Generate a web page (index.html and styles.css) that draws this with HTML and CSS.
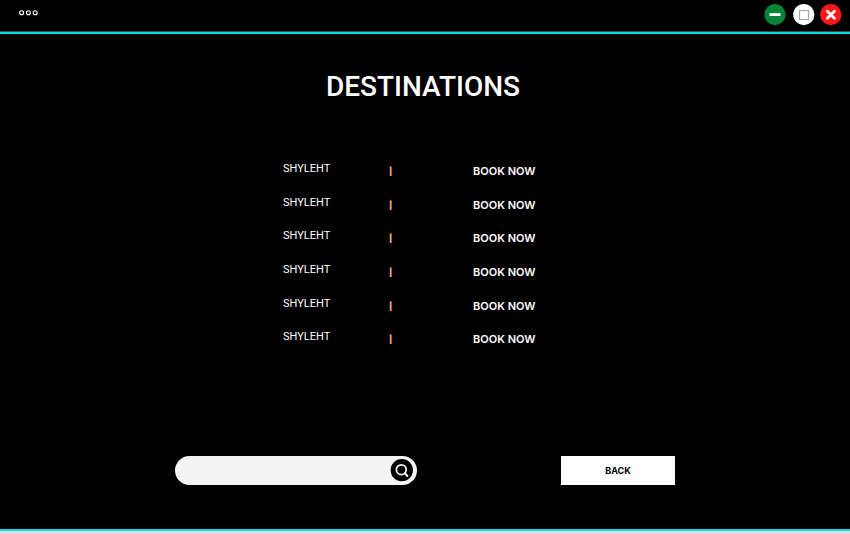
FILE: index.html
```html
<!DOCTYPE html>
<html lang="en">
<head>
<meta charset="utf-8">
<meta name="viewport" content="width=device-width, initial-scale=1">
<title>Destinations</title>
<link rel="stylesheet" href="styles.css">
</head>
<body>
<header class="titlebar">
  <button class="icon-button menu" aria-label="Menu">
    <svg width="20" height="6" viewBox="0 0 20 6" fill="none" stroke="#fff" stroke-width="1.1"><circle cx="3.6" cy="2.8" r="2"/><circle cx="10.4" cy="2.8" r="2"/><circle cx="17.2" cy="2.8" r="2"/></svg>
  </button>
  <div class="window-controls">
    <button class="icon-button" aria-label="Minimize">
      <svg width="22" height="22" viewBox="0 0 22 22"><circle cx="11" cy="10.6" r="10.6" fill="#07843a"/><path d="M5.5 10.6h11" stroke="#fff" stroke-width="2.8"/></svg>
    </button>
    <button class="icon-button maximize" aria-label="Maximize">
      <svg width="22" height="22" viewBox="0 0 22 22"><circle cx="10.8" cy="10.6" r="10.6" fill="#fff"/><rect x="6.5" y="6.5" width="9" height="9" fill="none" stroke="#aaa" stroke-width="1.2"/></svg>
    </button>
    <button class="icon-button" aria-label="Close">
      <svg width="22" height="22" viewBox="0 0 22 22"><circle cx="10.8" cy="10.6" r="10.6" fill="#ff1616"/><path d="M7.4 7.2l7 7M14.4 7.2l-7 7" stroke="#fff" stroke-width="2.8" stroke-linecap="round"/></svg>
    </button>
  </div>
</header>
<main class="content">
  <h1 class="heading">DESTINATIONS</h1>
  <table class="destinations">
    <tbody>
      <tr><td class="place">SHYLEHT</td><td class="divider">|</td><td class="action"><button class="book">BOOK NOW</button></td></tr>
      <tr><td class="place">SHYLEHT</td><td class="divider">|</td><td class="action"><button class="book">BOOK NOW</button></td></tr>
      <tr><td class="place">SHYLEHT</td><td class="divider">|</td><td class="action"><button class="book">BOOK NOW</button></td></tr>
      <tr><td class="place">SHYLEHT</td><td class="divider">|</td><td class="action"><button class="book">BOOK NOW</button></td></tr>
      <tr><td class="place">SHYLEHT</td><td class="divider">|</td><td class="action"><button class="book">BOOK NOW</button></td></tr>
      <tr><td class="place">SHYLEHT</td><td class="divider">|</td><td class="action"><button class="book">BOOK NOW</button></td></tr>
    </tbody>
  </table>
  <div class="toolbar">
    <form class="search">
      <input class="search-input" type="text" aria-label="Search destinations">
      <button class="icon-button" type="button" aria-label="Search">
        <svg width="23" height="23" viewBox="0 0 23 23"><circle cx="11.8" cy="11.2" r="11.1" fill="#000"/><circle cx="11.3" cy="10.7" r="4.9" fill="none" stroke="#f4f4f4" stroke-width="1.8"/><path d="M14.8 14.2l2.6 2.8" stroke="#f4f4f4" stroke-width="2" stroke-linecap="round"/></svg>
      </button>
    </form>
    <button class="back">BACK</button>
  </div>
</main>
</body>
</html>
```
FILE: styles.css
```css
* {
  box-sizing: border-box;
}

body {
  margin: 0;
  min-height: 100vh;
  display: flex;
  flex-direction: column;
  background: #000;
  color: #fff;
  font-family: Inter, "Liberation Sans", sans-serif;
  border-bottom: 3px solid #dedede;
}

button {
  padding: 0;
  border: 0;
  background: none;
  color: inherit;
  font: inherit;
  cursor: pointer;
}

.icon-button {
  display: flex;
}

.titlebar {
  display: flex;
  justify-content: space-between;
  align-items: flex-start;
  height: 34px;
  padding: 4px 8px 0 18px;
  border-bottom: 2px solid #00dbe5;
  box-shadow: inset 0 -1px #4a4548;
}

.menu {
  padding: 6px 0;
}

.window-controls {
  display: flex;
}

.maximize {
  margin: 0 5px 0 7px;
}

.content {
  flex: 1;
  display: flex;
  flex-direction: column;
  align-items: center;
  padding: 32px 16px 44px;
  border-bottom: 2px solid #00dbe5;
}

.heading {
  margin: 0 4px 0 0;
  font-family: Roboto, sans-serif;
  font-size: 28px;
  line-height: 42px;
  font-weight: 500;
}

.destinations {
  width: 100%;
  max-width: 284px;
  height: 202px;
  margin-top: 46px;
  border-collapse: collapse;
  font-size: 11px;
  line-height: 16px;
}

.destinations td {
  padding: 0;
  vertical-align: top;
}

.destinations .place {
  width: 106px;
  padding-top: 7px;
  font-family: Roboto, sans-serif;
}

.destinations .divider {
  width: 84px;
  padding-top: 9px;
  color: #ffb070;
  font-size: 8px;
  font-weight: 900;
}

.destinations .action {
  padding-top: 9px;
}

.book {
  display: block;
  font-weight: 600;
}

.toolbar {
  display: flex;
  justify-content: space-between;
  width: 100%;
  max-width: 500px;
  height: 29px;
  margin-top: auto;
}

.search {
  display: flex;
  align-items: center;
  width: 242px;
  padding-right: 4px;
  border-radius: 15px;
  background: #f4f4f4;
}

.search-input {
  flex: 1;
  min-width: 0;
  padding: 0 12px;
  border: 0;
  outline: 0;
  background: none;
  font: inherit;
  font-size: 12px;
}

.back {
  width: 114px;
  background: #fff;
  color: #000;
  font-size: 9px;
  font-weight: 700;
}
```
